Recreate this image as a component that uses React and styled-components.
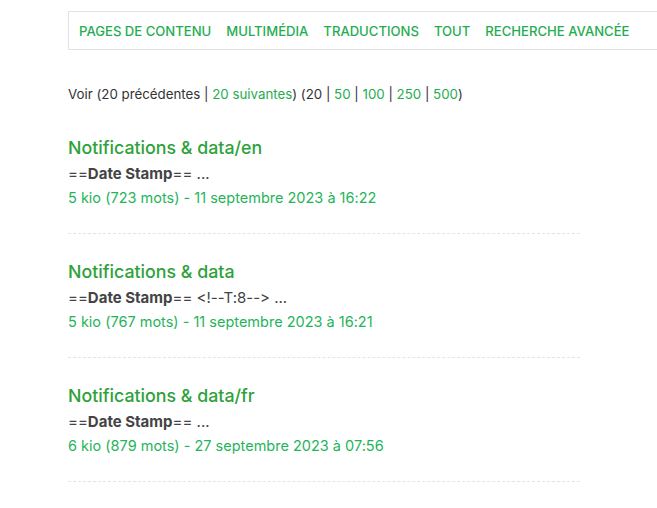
import React from "react";
import styled, { createGlobalStyle } from "styled-components";

const Global = createGlobalStyle`
  html, body { margin: 0; padding: 0; background: #fff; }
  body {
    font-family: Inter, "Liberation Sans", sans-serif;
    color: #333;
    overflow: hidden;
    font-variant-ligatures: none;
    font-feature-settings: "calt" 0, "liga" 0;
  }
`;

const Page = styled.div`
  padding: 11px 0 0 68px;
  width: 589px;
`;

const Nav = styled.nav`
  display: flex;
  align-items: center;
  gap: 15px;
  height: 37px;
  padding: 0 10px;
  border: 1px solid #e2e2e2;
  border-right: none;
  margin-right: -20px;
`;

const NavLink = styled.a`
  font-size: 13.1px;
  font-weight: 500;
  text-transform: uppercase;
  color: #1fad50;
  text-decoration: none;
  white-space: nowrap;
`;

const Pager = styled.p`
  margin: 34px 0 0;
  font-size: 13.3px;
  line-height: 20px;
  color: #333;
`;

const Link = styled.a`
  color: #1fad50;
  text-decoration: none;
`;

const Results = styled.ul`
  list-style: none;
  margin: 31px 0 0;
  padding: 0;
  width: 512px;
`;

const Result = styled.li`
  padding-bottom: 23px;
  margin-bottom: 25px;
  border-bottom: 1px dashed #e4e4e4;
`;

const Title = styled.a`
  display: block;
  font-size: 17.8px;
  font-weight: 500;
  line-height: 26px;
  color: #2ea23a;
  text-decoration: none;
`;

const Snippet = styled.div`
  padding-top: 1px;
  font-size: 15px;
  line-height: 24px;
  color: #444;
  b { font-weight: 700; }
`;

const Meta = styled.div`
  font-size: 14.5px;
  line-height: 24px;
  color: #1fb45a;
`;

const items = [
  { title: "Notifications & data/en", rest: " ...", meta: "5 kio (723 mots) - 11 septembre 2023 à 16:22" },
  { title: "Notifications & data", rest: " <!--T:8--> ...", meta: "5 kio (767 mots) - 11 septembre 2023 à 16:21" },
  { title: "Notifications & data/fr", rest: " ...", meta: "6 kio (879 mots) - 27 septembre 2023 à 07:56" },
];

export default function App() {
  return (
    <Page>
      <Global />
      <Nav>
        <NavLink>Pages de contenu</NavLink>
        <NavLink>Multimédia</NavLink>
        <NavLink>Traductions</NavLink>
        <NavLink>Tout</NavLink>
        <NavLink>Recherche avancée</NavLink>
      </Nav>
      <Pager>
        Voir (20 précédentes | <Link>20 suivantes</Link>) (20 | <Link>50</Link> | <Link>100</Link> | <Link>250</Link> | <Link>500</Link>)
      </Pager>
      <Results>
        {items.map((it) => (
          <Result key={it.title}>
            <Title>{it.title}</Title>
            <Snippet>
              ==<b>Date Stamp</b>=={it.rest}
            </Snippet>
            <Meta>{it.meta}</Meta>
          </Result>
        ))}
      </Results>
    </Page>
  );
}
